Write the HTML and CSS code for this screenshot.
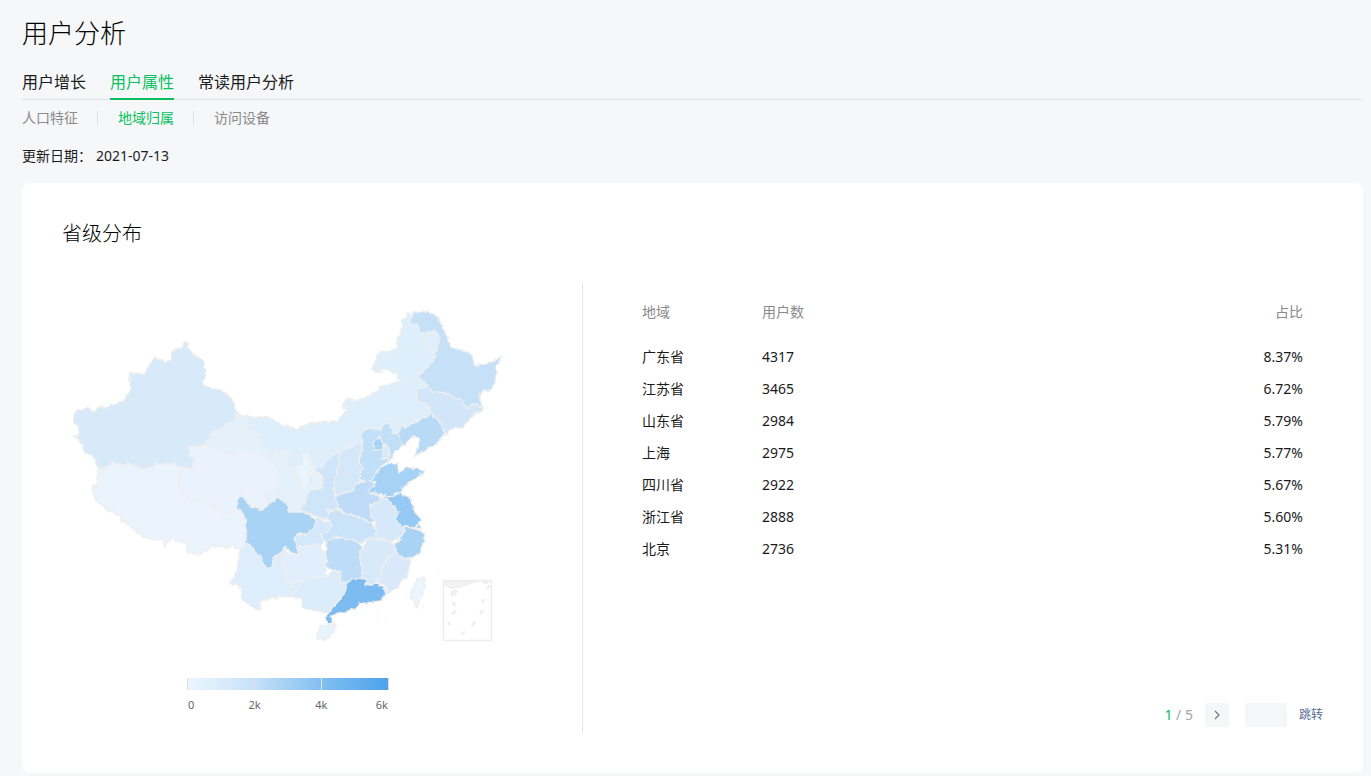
FILE: index.html
```html
<!DOCTYPE html>
<html lang="zh-CN">
<head>
<meta charset="utf-8">
<meta name="viewport" content="width=device-width, initial-scale=1">
<title>用户分析</title>
<link rel="stylesheet" href="styles.css">
</head>
<body>
<main class="page">
  <h1 class="page-title">用户分析</h1>
  <nav class="tabs">
    <a class="tab" href="#growth">用户增长</a>
    <a class="tab tab-active" href="#attr">用户属性</a>
    <a class="tab" href="#frequent">常读用户分析</a>
  </nav>
  <nav class="subtabs">
    <a class="subtab" href="#people">人口特征</a>
    <a class="subtab subtab-active" href="#region">地域归属</a>
    <a class="subtab" href="#device">访问设备</a>
  </nav>
  <p class="updated"><span>更新日期：</span><time datetime="2021-07-13">2021-07-13</time></p>

  <section class="card">
    <h2 class="card-title">省级分布</h2>
    <div class="card-body">
      <div class="map-panel">
        <svg class="map" viewBox="62 283 520 375" role="img" aria-label="省级分布">
          <defs>
            <filter id="coast" x="-5%" y="-5%" width="110%" height="110%" color-interpolation-filters="sRGB">
              <feTurbulence type="fractalNoise" baseFrequency="0.2" numOctaves="2" seed="4" result="n"/>
              <feDisplacementMap in="SourceGraphic" in2="n" scale="5" xChannelSelector="R" yChannelSelector="G"/>
            </filter>
          </defs>
          <g class="provinces" filter="url(#coast)">
            <!-- 内蒙古 -->
            <path fill="#deeefb" d="M238 414L246 416 270 418 283 425 297 429 310 423 337 421 347 411 343 407 344 403 347 398 355 401 376 393 380 387 401 381 395 373 383 369 377 372 372 369 380 351 386 353 395 348 403 327 401 321 409 313 417 320 430 330 436 329 441 337 436 352 432 363 424 375 428 385 432 405 431 413 420 420 403 428 398 434 392 433 390 423 383 423 382 430 366 428 362 433 362 443 340 452 332 455 323 467 314 468 308 452 302 466 288 468 273 458 259 445z"/>
            <!-- 甘肃 -->
            <path fill="#e4f1fb" d="M238 414L246 416 248 430 263 434 259 443 273 455 275 451 290 451 286 460 288 468 296 468 303 488 313 468 322 480 320 488 307 492 305 504 300 512 290 513 277 505 263 510 255 470 233 456 205 445 211 432 220 429 226 424 234 421z"/>
            <!-- 新疆 -->
            <path fill="#d8eafa" d="M73 416L77 410 89 408 91 411 95 411 99 406 105 408 124 401 126 395 131 392 129 374 142 373 146 375 146 371 154 357 166 363 171 361 172 351 181 347 183 343 188 343 189 349 195 355 203 361 206 372 203 382 204 386 221 390 233 399 235 408 238 413 235 417 234 421 226 424 220 429 211 432 205 445 188 447 190 455 194 460 192 469 181 467 175 464 157 464 153 467 140 468 128 463 123 466 113 462 106 469 99 469 96 465 95 458 88 454 83 451 83 445 79 440 73 437 78 436 78 425 73 423z"/>
            <!-- 西藏 -->
            <path fill="#ebf4fd" d="M99 469L106 469 113 462 123 466 128 463 140 468 153 467 157 464 175 464 182 468 179 482 181 490 190 498 215 506 222 513 233 513 237 508 242 513 246 521 246 547 237 550 233 545 228 549 218 545 208 549 201 554 189 553 186 543 171 539 165 547 163 540 143 537 130 526 112 510 108 511 94 498 93 485 98 486 97 471z"/>
            <!-- 青海 -->
            <path fill="#eaf3fd" d="M188 447L205 445 233 456 240 449 248 452 253 451 268 459 277 468 279 480 272 495 263 495 271 504 266 505 263 510 252 507 245 500 240 495 237 507 233 513 222 513 215 506 190 498 181 490 179 482 182 468 192 469 194 460 190 455z"/>
            <!-- 宁夏 -->
            <path fill="#e9f5fe" d="M303 455L308 452 310 462 314 467 308 473 310 482 305 487 301 485 299 475 293 468 302 465z"/>
            <!-- 黑龙江 -->
            <path fill="#c5e0f7" d="M412 313L422 311 435 314 440 321 445 333 452 348 467 351 472 355 474 365 487 364 502 356 497 367 495 383 492 390 483 390 479 395 482 407 473 404 466 408 461 399 452 398 448 393 432 392 428 385 423 382 419 374 432 363 436 352 440 337 435 330 430 333 420 333 417 325 411 322z"/>
            <path fill="none" d="M423 334L427 343 433 349 436 352"/>
            <!-- 吉林 -->
            <path fill="#d1e6f9" d="M416 389L422 388 428 385 432 392 448 393 452 398 461 399 466 408 473 404 482 407 482 412 473 415 468 421 462 428 453 427 445 434 440 422 431 413 427 403 418 402z"/>
            <!-- 辽宁 -->
            <path fill="#b8daf6" d="M431 413L440 422 445 434 435 445 422 452 414 457 418 448 420 438 412 437 403 447 397 438 401 425 403 428 420 420z"/>
            <!-- 河北 -->
            <path fill="#c1dff7" d="M366 428L382 430 383 425 390 423 392 433 398 434 403 446 393 454 389 462 382 465 372 480 371 483 360 481 362 467 359 460 363 447 362 433z"/>
            <!-- 天津 -->
            <path fill="#d8eaf9" d="M382 449L386 444 390 452 388 460 382 458z"/>
            <!-- 北京 -->
            <path fill="#a8d3f5" d="M380 437L384 444 383 450 374 450 373 444z"/>
            <!-- 山西 -->
            <path fill="#d4e8fa" d="M340 452L360 443 363 447 359 460 362 467 359 482 353 490 335 496 334 485 337 470z"/>
            <!-- 陕西 -->
            <path fill="#cfe5f9" d="M340 452L332 455 323 467 315 467 322 478 322 488 307 492 306 501 301 510 318 517 328 520 327 510 338 509 335 496 334 485 337 470z"/>
            <!-- 河南 -->
            <path fill="#bedcf7" d="M360 481L371 482 376 484 368 492 380 496 378 502 370 505 371 517 376 521 372 523 359 517 343 513 338 507 335 496 353 490z"/>
            <!-- 山东 -->
            <path fill="#a6d2f5" d="M390 463L397 464 399 472 407 467 424 470 423 473 410 482 400 492 390 497 380 494 368 492 376 483 371 482 378 470z"/>
            <!-- 安徽 -->
            <path fill="#d6e9fa" d="M380 497L390 500 398 512 396 522 405 527 402 537 390 542 377 538 375 527 376 521 371 517 370 505 378 502z"/>
            <!-- 江苏 -->
            <path fill="#96c9f3" d="M380 494L390 497 400 493 410 498 414 510 422 520 418 523 415 528 405 527 396 522 398 512 392 503z"/>
            <!-- 上海 -->
            <path fill="#a6d2f5" d="M418 523L423 528 416 529z"/>
            <!-- 浙江 -->
            <path fill="#a9d3f5" d="M405 527L416 529 425 533 424 540 420 553 413 558 405 560 398 555 394 545 402 537z"/>
            <!-- 湖北 -->
            <path fill="#cae3f9" d="M328 510L338 509 343 513 359 517 372 523 376 530 377 537 360 542 352 540 338 537 326 542 320 538 322 532 332 527 328 520z"/>
            <!-- 重庆 -->
            <path fill="#d3e8fa" d="M318 517L332 525 330 530 320 533 323 543 320 545 312 545 302 552 295 547 295 535 307 534z"/>
            <!-- 云南 -->
            <path fill="#deedfb" d="M245 543L250 543 262 558 266 567 273 566 274 555 283 548 288 553 282 558 285 567 286 582 297 588 292 596 260 600 261 611 253 607 241 600 243 593 238 585 229 583 238 570 240 552z"/>
            <!-- 贵州 -->
            <path fill="#e1effd" d="M282 558L292 553 298 555 298 547 310 546 320 545 325 553 326 565 325 577 310 577 297 583 286 582 285 567z"/>
            <!-- 四川 -->
            <path fill="#a9d3f5" d="M237 500L241 494 244 498 252 507 263 510 266 505 273 502 277 497 287 504 288 512 305 512 318 521 307 534 297 534 294 539 299 553 292 554 286 547 274 558 272 567 265 568 261 558 248 543 246 547 245 517 237 507z"/>
            <!-- 湖南 -->
            <path fill="#bcdcf7" d="M326 542L337 537 358 542 362 548 360 557 362 578 348 582 342 583 340 572 327 568 326 553z"/>
            <!-- 江西 -->
            <path fill="#d8eafa" d="M362 548L370 538 387 540 394 545 396 552 387 558 382 570 377 583 365 585 362 578 360 557z"/>
            <!-- 福建 -->
            <path fill="#d9e9fb" d="M396 552L402 558 412 560 407 575 397 587 387 594 385 585 377 583 382 570 387 558z"/>
            <!-- 广西 -->
            <path fill="#dbecfb" d="M287 582L297 583 310 577 325 577 333 571 340 572 341 582 347 583 345 592 337 603 327 613 312 610 303 608 302 598 292 596 297 590z"/>
            <!-- 广东 -->
            <path fill="#7dbcf0" d="M345 592L347 583 355 578 366 579 365 585 377 583 384 587 386 595 381 601 359 604 355 609 336 614 331 617 334 623 327 624 325 617 332 608 342 598z"/>
            <!-- 海南 -->
            <path fill="#e7f3fd" d="M317 632L320 626 336 624 333 633 325 641 317 638z"/>
            <!-- 台湾 -->
            <path fill="#ebf5fd" d="M411 592L417 580 423 577 426 579 423 592 417 607 412 600z"/>
          </g>
          <g class="islets">
            <path d="M377 616h2M384 619h1M407 594h1M423 606h1M438 573h1"/>
          </g>
          <g class="inset">
            <path d="M443.500 580.500h48v60h-48z"/>
            <path class="inset-land" d="M444 581V584L450 588 460 587 474 582 480 581zM482 581L486 584 488 581zM451 592L454 590 457 591 455 595 452 596z"/>
            <path class="inset-dash" d="M490 585L487 589M483 599V603M483 610L480 614M475 621L472 626M465 632L461 634M448 622L450 625M452 614L456 611M453 602L455 606"/>
          </g>
        </svg>
        <div class="legend">
          <div class="legend-bar"><span></span><span></span><span></span></div>
          <div class="legend-labels"><span>0</span><span>2k</span><span>4k</span><span>6k</span></div>
        </div>
      </div>

      <div class="data-panel">
        <table class="data">
          <thead>
            <tr><th class="col-area" scope="col">地域</th><th scope="col">用户数</th><th class="col-rate" scope="col">占比</th></tr>
          </thead>
          <tbody>
            <tr><td>广东省</td><td>4317</td><td class="col-rate">8.37%</td></tr>
            <tr><td>江苏省</td><td>3465</td><td class="col-rate">6.72%</td></tr>
            <tr><td>山东省</td><td>2984</td><td class="col-rate">5.79%</td></tr>
            <tr><td>上海</td><td>2975</td><td class="col-rate">5.77%</td></tr>
            <tr><td>四川省</td><td>2922</td><td class="col-rate">5.67%</td></tr>
            <tr><td>浙江省</td><td>2888</td><td class="col-rate">5.60%</td></tr>
            <tr><td>北京</td><td>2736</td><td class="col-rate">5.31%</td></tr>
          </tbody>
        </table>
        <div class="pager">
          <span class="pager-count"><span class="pager-now">1</span> / 5</span>
          <button class="pager-next" type="button" aria-label="下一页">
            <svg viewBox="0 0 10 12" width="10" height="12"><path d="M3 2L7 6 3 10"/></svg>
          </button>
          <input class="pager-input" type="text" aria-label="页码">
          <a class="pager-jump" href="#jump">跳转</a>
        </div>
      </div>
    </div>
  </section>
</main>
</body>
</html>
```

FILE: styles.css
```css
* {
  box-sizing: border-box;
}

body {
  margin: 0;
  background: #f6f7f9;
  color: #1a1b1c;
  font: 400 14px/20px "Noto Sans", "Noto Sans CJK SC", sans-serif;
}

a {
  color: inherit;
  text-decoration: none;
}

.page {
  padding: 14px 8px 3px 22px;
}

.page-title {
  margin: 0 0 18px;
  color: #000;
  font-size: 26px;
  font-weight: 300;
  line-height: 38px;
}

.tabs {
  display: flex;
  gap: 24px;
  height: 30px;
  border-bottom: 1px solid #e1e3e5;
}

.tab {
  height: 30px;
  font-size: 16px;
  line-height: 24px;
}

.tab-active {
  border-bottom: 2px solid #07c160;
  color: #07c160;
}

.subtabs {
  display: flex;
  align-items: center;
  margin-top: 8px;
  color: #888a8c;
}

.subtab {
  line-height: 20px;
}

.subtab + .subtab {
  display: flex;
  align-items: center;
}

.subtab + .subtab::before {
  content: "";
  width: 1px;
  height: 14px;
  margin: 0 20px 0 19px;
  background: #dcdee0;
}

.subtab-active {
  color: #07c160;
}

.updated {
  display: flex;
  gap: 4px;
  margin: 18px 0 17px;
}

.card {
  padding: 36px 40px 40px;
  border-radius: 8px;
  background: #fff;
}

.card-title {
  margin: 0 0 34px;
  color: #000;
  font-size: 20px;
  font-weight: 300;
  line-height: 30px;
}

.card-body {
  display: grid;
  grid-template-columns: minmax(0, 521fr) minmax(0, 740fr);
  min-height: 450px;
}

.map-panel {
  border-right: 1px solid #e4e6e8;
}

.map {
  display: block;
  width: 100%;
}

.provinces path {
  stroke: #eee;
  stroke-width: 1.4;
  stroke-linejoin: round;
}

.islets path,
.inset path {
  fill: none;
  stroke: #eee;
  stroke-width: 1.5;
}

.inset .inset-land {
  fill: #f3f3f3;
}

.inset .inset-dash {
  stroke-width: 2.5;
}

.legend {
  width: 202px;
  margin: 20px 0 0 125px;
  color: #666;
  font-size: 11px;
}

.legend-bar {
  display: grid;
  grid-template-columns: repeat(3, 1fr);
  height: 12px;
  border-left: 1px solid #e0e0e0;
  background: linear-gradient(to right, #ebf6ff, #c7e1f8 33%, #83bff1 66%, #4ba2eb);
}

.legend-bar span {
  border-right: 1px solid #e0e0e0;
}

.legend-labels {
  display: grid;
  grid-template-columns: 1fr 2fr 2fr 1fr;
  padding: 5px 1px 0;
  text-align: center;
}

.legend-labels span:first-child {
  text-align: left;
}

.legend-labels span:last-child {
  text-align: right;
}

.data-panel {
  display: flex;
  flex-direction: column;
  justify-content: space-between;
  padding: 0 0 6px 59px;
}

.data {
  width: calc(100% - 20px);
  border-collapse: collapse;
  text-align: left;
}

.data th {
  height: 58px;
  padding: 0;
  color: #888a8c;
  font-weight: 400;
}

.data td {
  height: 32px;
  padding: 0;
}

.data .col-area {
  width: 120px;
}

.data .col-rate {
  text-align: right;
}

.pager {
  display: flex;
  align-items: center;
  justify-content: flex-end;
}

.pager-count {
  color: #a5a7a9;
}

.pager-now {
  color: #07c160;
}

.pager-next {
  display: flex;
  align-items: center;
  justify-content: center;
  width: 24px;
  height: 24px;
  margin: 0 16px 0 12px;
  padding: 0;
  border: 0;
  border-radius: 2px;
  background: #f5f6f8;
}

.pager-next path {
  fill: none;
  stroke: #777;
  stroke-width: 1.2;
}

.pager-input {
  width: 42px;
  height: 24px;
  padding: 0 6px;
  border: 0;
  border-radius: 2px;
  background: #f5f6f8;
  font: inherit;
}

.pager-jump {
  margin-left: 12px;
  color: #576b95;
  font-size: 12px;
}
```
